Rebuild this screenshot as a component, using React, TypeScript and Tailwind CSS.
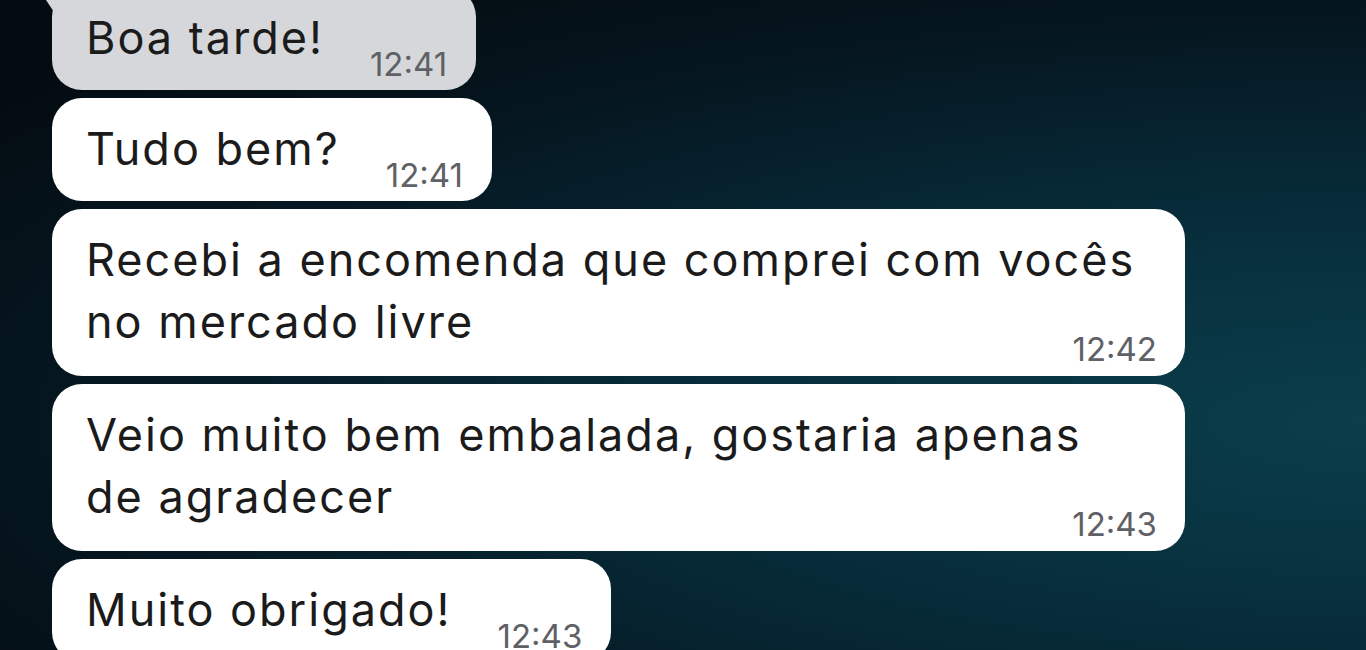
import React from 'react';

type Message = {
  lines: string[];
  time: string;
  gray?: boolean;
  tail?: boolean;
};

const messages: Message[] = [
  { lines: ['Boa tarde!'], time: '12:41', gray: true, tail: true },
  { lines: ['Tudo bem?'], time: '12:41' },
  { lines: ['Recebi a encomenda que comprei com vocês', 'no mercado livre'], time: '12:42' },
  { lines: ['Veio muito bem embalada, gostaria apenas', 'de agradecer'], time: '12:43' },
  { lines: ['Muito obrigado!'], time: '12:43' },
];

const Bubble: React.FC<{ msg: Message }> = ({ msg }) => {
  const bg = msg.gray ? 'bg-[#d6d7da]' : 'bg-white';

  if (msg.lines.length === 1) {
    return (
      <div className={`relative w-fit rounded-[30px] ${bg} pl-[34px] pr-[29px] pt-[28px] pb-[30px]`}>
        {msg.tail && (
          <svg className="absolute -left-[12px] top-0" width="24" height="44" viewBox="0 0 24 44">
            <path d="M24 0 H4 C0 0 -1 4 2 7 L24 40 Z" fill="#d6d7da" />
          </svg>
        )}
        <div className="flex items-end">
          <span className="text-[45px] leading-none tracking-[2px] text-[#1b1b1b]">{msg.lines[0]}</span>
          <span className="ml-[46px] -mb-[21px] text-[33px] leading-none text-[#5f6166]">{msg.time}</span>
        </div>
      </div>
    );
  }

  // wrapped messages take the full bubble width
  return (
    <div className={`w-[1133px] rounded-[30px] ${bg} pl-[34px] pr-[28px] pt-[20px] pb-[10px]`}>
      <div className="text-[45px] leading-[62px] tracking-[2px] text-[#1b1b1b]">
        {msg.lines.map((l) => (
          <div key={l}>{l}</div>
        ))}
      </div>
      <div className="-mt-[20px] text-right text-[33px] leading-none text-[#5f6166]">{msg.time}</div>
    </div>
  );
};

export default function App() {
  return (
    <div
      className="h-[650px] w-full overflow-hidden bg-[radial-gradient(ellipse_at_100%_65%,#0b3d4a_0%,#083240_25%,#062633_45%,#05161f_68%,#040b11_90%)]"
      style={{ fontFamily: 'Inter, "Noto Sans", sans-serif' }}
    >
      <div className="-mt-[13px] flex flex-col gap-2 pl-[52px]">
        {messages.map((m, i) => (
          <Bubble key={i} msg={m} />
        ))}
      </div>
    </div>
  );
}
